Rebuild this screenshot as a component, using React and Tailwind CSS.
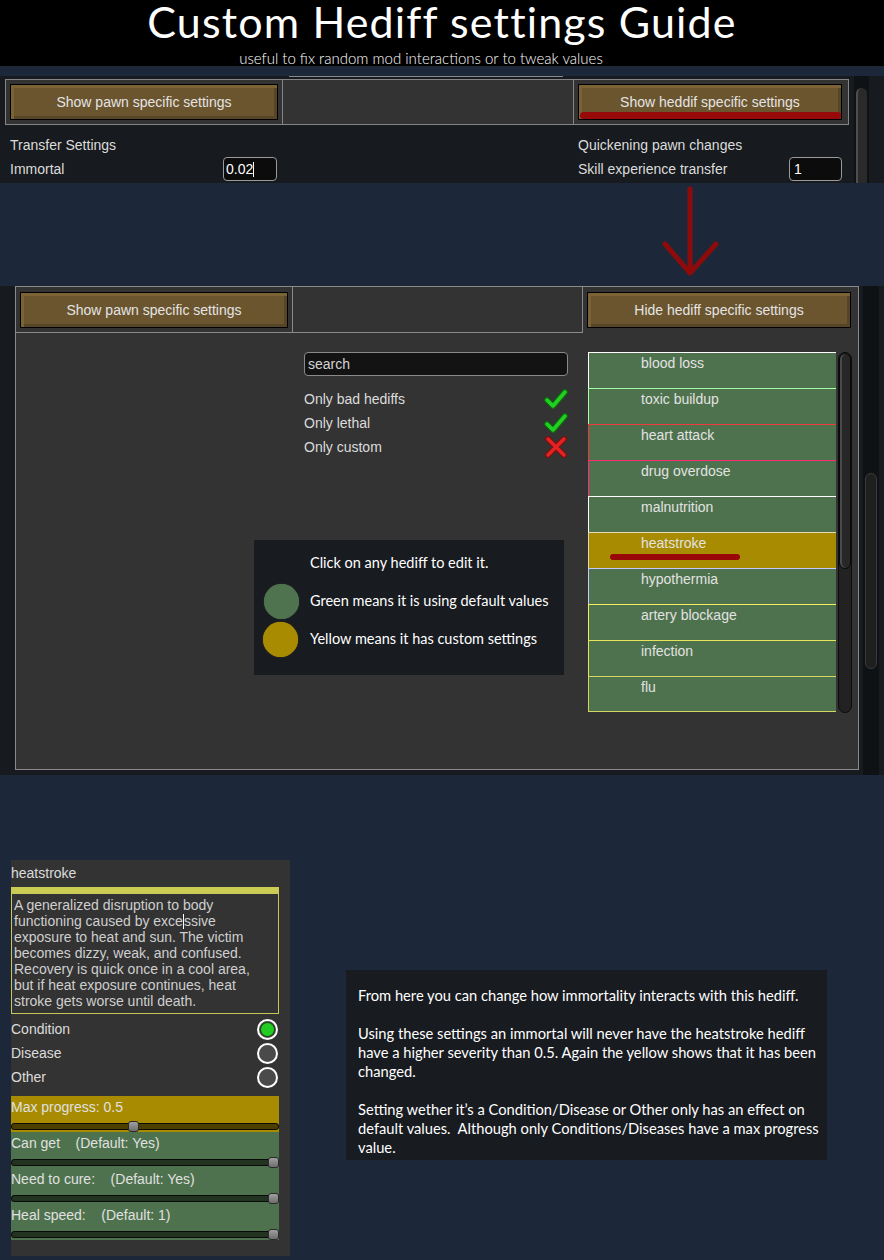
import React from 'react';

const hediffs = [
  { name: 'blood loss', edge: 'border-[#ffffff]' },
  { name: 'toxic buildup', edge: 'border-[#a8ffa8]' },
  { name: 'heart attack', edge: 'border-[#ee3a3a]' },
  { name: 'drug overdose', edge: 'border-[#ff2a78]' },
  { name: 'malnutrition', edge: 'border-[#ffffff]' },
  { name: 'heatstroke', edge: 'border-[#e2dcb0]', custom: true },
  { name: 'hypothermia', edge: 'border-[#c8c8ff]' },
  { name: 'artery blockage', edge: 'border-[#f0f060]' },
  { name: 'infection', edge: 'border-[#e6e65a]' },
  { name: 'flu', edge: 'border-[#d6d660]' },
];

const GameButton = ({ label, className = '' }) => (
  <div
    className={`h-[36px] border border-black bg-[#6b552f] shadow-[inset_3px_3px_0_#7b6336,inset_-3px_-3px_0_#574527] flex items-center justify-center text-[14px] text-[#e4e4e4] ${className}`}
  >
    {label}
  </div>
);

const Check = () => (
  <svg width="24" height="20" viewBox="0 0 24 20">
    <path d="M3 11 L9 17 L21 3" fill="none" stroke="#0f6a0f" strokeWidth="6" strokeLinecap="round" strokeLinejoin="round" />
    <path d="M3 11 L9 17 L21 3" fill="none" stroke="#22d022" strokeWidth="3.5" strokeLinecap="round" strokeLinejoin="round" />
  </svg>
);

const Cross = () => (
  <svg width="24" height="22" viewBox="0 0 24 22">
    <path d="M4 3 L20 19 M20 3 L4 19" fill="none" stroke="#7a1010" strokeWidth="6" strokeLinecap="round" />
    <path d="M4 3 L20 19 M20 3 L4 19" fill="none" stroke="#e42222" strokeWidth="3.5" strokeLinecap="round" />
  </svg>
);

const Radio = ({ on }) => (
  <div className="w-[21px] h-[21px] rounded-full border-2 border-white bg-[#4a4a4a] flex items-center justify-center">
    {on && <div className="w-[15px] h-[15px] rounded-full bg-[#22cc22] border border-[#1a3a1a]" />}
  </div>
);

const Slider = ({ at }) => (
  <div className="relative h-[11px] flex items-center">
    <div className="w-full h-[7px] rounded-full bg-black/55 border border-black/80" />
    <div className={`absolute top-0 ${at} w-[11px] h-[11px] rounded-[3px] border border-[#2a2a2a] bg-gradient-to-b from-[#a0a0a0] to-[#6e6e6e]`} />
  </div>
);

const SettingRow = ({ label, at, tone }) => (
  <div className={`h-[36px] ${tone} flex flex-col`}>
    <div className="h-[26px] pt-[1px] leading-[20px] whitespace-pre">{label}</div>
    <Slider at={at} />
  </div>
);

export default function App() {
  const game = "font-['Liberation_Sans',Arial,sans-serif]";
  const ui = "font-['Lato','Open_Sans',sans-serif]";

  return (
    <div className={`w-[884px] h-[1260px] bg-[#1c2839] flex flex-col overflow-hidden ${game}`}>
      {/* banner */}
      <header className={`h-[66px] shrink-0 bg-black flex flex-col items-center text-white ${ui}`}>
        <h1 className="text-[43px] leading-[44px] tracking-[1.15px] font-normal">Custom Hediff settings Guide</h1>
        <p className="mt-[6px] mr-[42px] text-[15px] leading-[16px] font-light">useful to fix random mod interactions or to tweak values</p>
      </header>
      <div className="h-[10px] shrink-0" />

      {/* mod settings window, collapsed */}
      <section className="h-[107px] shrink-0 bg-[#171a1e] flex">
        <div className="w-[854px] flex flex-col">
          <div className="h-px w-[274px] ml-[289px] bg-[#8a8a8a]" />
          <div className="mt-[2px] ml-[5px] w-[844px] h-[46px] border border-[#858585] bg-[#333333] flex">
            <div className="w-[277px] border-r border-[#858585] pl-[4px] pt-[4px]">
              <GameButton label="Show pawn specific settings" className="w-[268px]" />
            </div>
            <div className="w-[291px] border-r border-[#858585]" />
            <div className="flex-1 pl-[4px] pt-[4px] relative">
              <GameButton label="Show heddif specific settings" className="w-[264px]" />
              <div className="absolute left-[6px] top-[32px] w-[261px] h-[7px] rounded-full bg-[#980a0a]" />
            </div>
          </div>
          <div className="flex mt-[8px] text-[14px] text-[#dcdcdc]">
            <div className="ml-[10px] w-[268px]">
              <div className="h-[24px] flex items-center">Transfer Settings</div>
              <div className="h-[24px] flex items-center justify-between">
                <span>Immortal</span>
                <div className="w-[54px] h-[24px] mr-[1px] rounded-[4px] border border-[#9a9a9a] bg-[#0c0c0c] flex items-center pl-[2px] text-white">
                  0.02<span className="inline-block w-px h-[15px] bg-white" />
                </div>
              </div>
            </div>
            <div className="ml-[300px] w-[264px]">
              <div className="h-[24px] flex items-center">Quickening pawn changes</div>
              <div className="h-[24px] flex items-center justify-between">
                <span>Skill experience transfer</span>
                <div className="w-[53px] h-[24px] rounded-[4px] border border-[#9a9a9a] bg-[#0c0c0c] flex items-center pl-[4px] text-white">
                  1
                </div>
              </div>
            </div>
          </div>
        </div>
        <div className="w-[15px] bg-[#0f1215] pt-[12px] pl-[2px]">
          <div className="w-[11px] h-full rounded-t-full bg-[#2a2a2a] border-l-2 border-[#4e4e4e]" />
        </div>
      </section>

      {/* arrow */}
      <div className="h-[103px] shrink-0 pl-[660px] pt-[1px]">
        <svg width="64" height="94" viewBox="0 0 64 94">
          <path d="M30 5 L30 89 M5 60 L30 89 L56 60" fill="none" stroke="#8e0b0b" strokeWidth="5" strokeLinecap="round" strokeLinejoin="round" />
        </svg>
      </div>

      {/* mod settings window, hediff list open */}
      <section className="h-[489px] shrink-0 bg-[#171a1e] flex">
        <div className="ml-[15px] w-[844px] h-[484px] border border-[#8a8a8a] bg-[#333333] flex flex-col text-[14px] text-[#dcdcdc]">
          <div className="h-[46px] flex">
            <div className="w-[277px] border-r border-b border-[#8a8a8a] pl-[4px] pt-[5px]">
              <GameButton label="Show pawn specific settings" className="w-[268px]" />
            </div>
            <div className="w-[290px] border-r border-b border-[#8a8a8a]" />
            <div className="flex-1 pl-[4px] pt-[5px]">
              <GameButton label="Hide hediff specific settings" className="w-[264px]" />
            </div>
          </div>

          <div className="flex pl-[238px] pt-[19px]">
            <div className="w-[314px] flex flex-col">
              <div className="ml-[50px] w-[264px] h-[24px] rounded-[4px] border border-[#8a8a8a] bg-[#131313] flex items-center pl-[3px] text-[#d4d4d4]">
                search
              </div>
              <div className="mt-[11px] ml-[50px] w-[264px]">
                {[
                  ['Only bad hediffs', true],
                  ['Only lethal', true],
                  ['Only custom', false],
                ].map(([label, on]) => (
                  <div key={label} className="h-[24px] flex items-center justify-between">
                    <span>{label}</span>
                    {on ? <Check /> : <Cross />}
                  </div>
                ))}
              </div>

              <div className={`mt-[81px] w-[310px] h-[135px] bg-[#181b20] pt-[4px] text-white text-[14.5px] ${ui}`}>
                <div className="h-[38px] flex items-center pl-[56px]">Click on any hediff to edit it.</div>
                <div className="h-[38px] flex items-center">
                  <div className="w-[56px] pl-[10px]">
                    <div className="w-[35px] h-[35px] rounded-full bg-[#4f734f] shadow-[0_0_1px_#4f734f]" />
                  </div>
                  Green means it is using default values
                </div>
                <div className="h-[38px] flex items-center">
                  <div className="w-[56px] pl-[9px]">
                    <div className="w-[35px] h-[35px] rounded-full bg-[#a88b00] shadow-[0_0_1px_#a88b00]" />
                  </div>
                  Yellow means it has custom settings
                </div>
              </div>
            </div>

            <div className="ml-[20px] flex">
              <div className="w-[248px]">
                {hediffs.map((h, i) => (
                  <div
                    key={h.name}
                    className={`relative h-[36px] border-t border-l ${h.edge} ${i === hediffs.length - 1 ? 'border-b' : ''} ${h.custom ? 'bg-[#a88b00]' : 'bg-[#4e724d]'} pl-[52px] pt-[2px] leading-[16px] text-[#e2e2e2]`}
                  >
                    {h.name}
                    {h.custom && (
                      <div className="absolute left-[21px] top-[21px] w-[130px] h-[6px] rounded-full bg-[#980808]" />
                    )}
                  </div>
                ))}
              </div>
              <div className="ml-[2px] w-[14px] h-[361px] rounded-full bg-[#222222] border border-[#0c0c0c] overflow-hidden">
                <div className="h-[216px] rounded-full bg-[#272727] border border-[#0a0a0a] shadow-[inset_2px_0_0_#4a4a4a]" />
              </div>
            </div>
          </div>
        </div>
        <div className="ml-[4px] w-[16px] bg-[#0f1215] pt-[187px] pl-[2px]">
          <div className="w-[12px] h-[196px] rounded-full bg-[#1f1f1f] border border-[#3a3a3a]" />
        </div>
      </section>

      {/* single hediff editor + notes */}
      <div className="h-[85px] shrink-0" />
      <div className="flex pl-[11px]">
        <div className="w-[279px] h-[396px] bg-[#333333] pr-[11px] text-[14px] text-[#dcdcdc]">
          <div className="h-[27px] flex items-center">heatstroke</div>
          <div className="h-[6px] bg-[#cccc55]" />
          <div className="h-[121px] border border-[#c8c85a] pl-[2px] pt-[3px] leading-[16px] text-[#cfcfcf]">
            A generalized disruption to body
            <br />
            functioning caused by exce<span className="inline-block w-px h-[15px] bg-white align-[-3px]" />ssive
            <br />
            exposure to heat and sun. The victim
            <br />
            becomes dizzy, weak, and confused.
            <br />
            Recovery is quick once in a cool area,
            <br />
            but if heat exposure continues, heat
            <br />
            stroke gets worse until death.
          </div>
          <div className="mt-[3px]">
            {[
              ['Condition', true],
              ['Disease', false],
              ['Other', false],
            ].map(([label, on]) => (
              <div key={label} className="h-[24px] flex items-center justify-between pr-[1px]">
                <span>{label}</span>
                <Radio on={on} />
              </div>
            ))}
          </div>
          <div className="mt-[7px] text-[#e0e0e0]">
            <SettingRow label="Max progress: 0.5" at="left-[117px]" tone="bg-[#a88b00]" />
            <SettingRow label="Can get    (Default: Yes)" at="right-0" tone="bg-[#4e724d]" />
            <SettingRow label="Need to cure:    (Default: Yes)" at="right-0" tone="bg-[#4e724d]" />
            <SettingRow label="Heal speed:    (Default: 1)" at="right-0" tone="bg-[#4e724d]" />
          </div>
        </div>

        <div className={`ml-[56px] mt-[110px] w-[481px] h-[190px] bg-[#181b20] pl-[12px] pt-[16px] text-[14.7px] leading-[19px] text-white ${ui}`}>
          From here you can change how immortality interacts with this hediff.
          <br />
          <br />
          Using these settings an immortal will never have the heatstroke hediff
          <br />
          have a higher severity than 0.5. Again the yellow shows that it has been
          <br />
          changed.
          <br />
          <br />
          Setting wether it’s a Condition/Disease or Other only has an effect on
          <br />
          default values.&nbsp; Although only Conditions/Diseases have a max progress
          <br />
          value.
        </div>
      </div>
    </div>
  );
}
